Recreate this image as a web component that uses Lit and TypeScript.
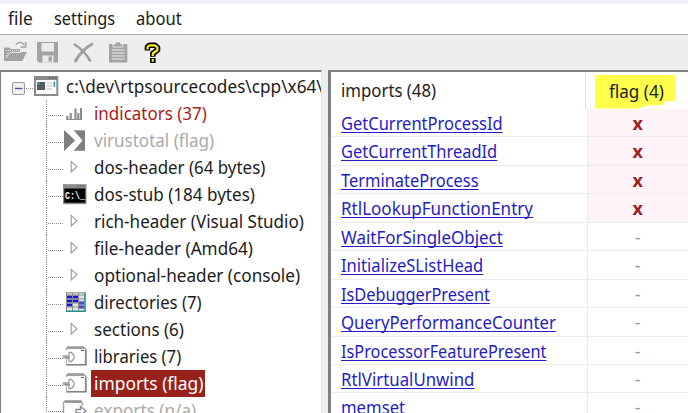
import { LitElement, html, css, svg, nothing } from "lit";
import { customElement, property } from "lit/decorators.js";
import { classMap } from "lit/directives/class-map.js";

// Single-line label condensed horizontally to a set advance width.
@customElement("fit-label")
class FitLabel extends LitElement {
  @property() text = "";
  @property({ type: Number }) span = 0;

  static styles = css`
    :host { display: block; white-space: pre; text-align: left; }
    .glyphs {
      display: inline-block;
      transform-origin: 0 50%;
      text-decoration: var(--line, none);
      text-decoration-thickness: 1.4px;
      text-underline-offset: 2px;
      text-decoration-skip-ink: none;
    }
  `;

  updated() {
    const glyphs = this.renderRoot.querySelector(".glyphs") as HTMLElement;
    this.style.width = `${this.span}px`;
    glyphs.style.transform = `scaleX(${this.span / glyphs.offsetWidth})`;
  }

  render() {
    return html`<span class="glyphs">${this.text}</span>`;
  }
}

const folderFrame = svg`
  <path d="M66.5 7V5.5L68 4H83.5L85.5 6V22" fill="none" stroke="#a5a5a5" stroke-width="1.4"/>
  <path d="M67 4.8H84" stroke="#a0a0a0" stroke-width="2.6"/>
  <path d="M66 21.8H86.5" stroke="#7d7d7d" stroke-width="1.5"/>
  <path d="M66.5 17V22" stroke="#aaa" stroke-width="1.1"/>
  <path d="M86 7V22" stroke="#777" stroke-width="1.2"/>
  <path d="M81 7.5H84" stroke="#666"/>
  <path d="M62.5 13H69V9.5H71.5L74 12.5V15.5L71.500 18.500H69V15.500H65" fill="#fff" stroke="#a0a0a0" stroke-width="1.3"/>
  <path d="M63 14.300H70" stroke="#999" stroke-width="1.6"/>`;

const glyph: Record<string, unknown> = {
  root: svg`
    <rect x="12.5" y="9.5" width="12" height="12" rx="1.5" fill="#f1f1f1" stroke="#999"/>
    <path d="M15 15.5H22.5" stroke="#4358a8" stroke-width="1.4"/>
    <rect x="35" y="4" width="22.3" height="18" fill="#fff" stroke="#8a8a8a" stroke-width="2"/>
    <path d="M34 5H58" stroke="#8a8a8a" stroke-width="4"/>
    <path d="M49 4.8H57" stroke="#444" stroke-dasharray="1.5 1.5"/>
    <rect x="37" y="9" width="8" height="8" fill="#5a5a5a"/>
    <rect x="37" y="9" width="3" height="3" fill="#299"/>
    <path d="M46.5 10H52M46.5 13H52M46.5 16H52" stroke="#bbb" stroke-width="1.2"/>
    <path d="M54.3 8.500V14" stroke="#299" stroke-width="1.4"/>`,
  bars: svg`<path d="M67.3 16V20M70.7 13V20M75.500 8.500V20M78.300 13V20M81 8V20" stroke="#8a8a8a" stroke-width="2.100"/>
    <path d="M66 19.5H82" stroke="#909090"/>`,
  virus: svg`<rect x="64" y="3.3" width="21" height="20.5" fill="#808080"/>
    <path d="M64 3L73.500 3L82.500 13.500L73.500 24H64L75 13.500Z" fill="#fff"/>
    <path d="M64 3.3L75 13.5L64 23.8Z" fill="#808080"/>`,
  arrow: svg`<path d="M71.2 7.5V18L77 12.7Z" fill="#fff" stroke="#999" stroke-width="1.1"/>`,
  dos: svg`<rect x="63" y="3.2" width="23.5" height="20" fill="#8c8c8c"/>
    <path d="M77 5H85.5" stroke="#555" stroke-dasharray="1.5 1.3"/>
    <rect x="64.3" y="7.5" width="21" height="14.2" fill="#000"/>
    <text class="prompt" x="65" y="17.5" textLength="20" lengthAdjust="spacingAndGlyphs">C:\\_</text>`,
  grid: svg`<rect x="66" y="3.5" width="19" height="19" fill="#e6e6e6"/>
    <path d="M67 8H72M73 8H78M67 12H72M73 12H78M67 16H72M79 14H84M79 18H84" stroke="#1616dc" stroke-width="2.8"/>
    <path d="M66.5 4V22M72.5 4V22M78.5 4V22M66 3.8H85M66 6H84M66 10H84M66 14H84M66 18H84" stroke="#8b8b8b" stroke-width="1"/>
    <path d="M85 3.5V22.3H66" fill="none" stroke="#2b8c8c" stroke-width="1.6"/>`,
  lib: folderFrame,
  exp: svg`<path d="M63.5 22V5.5L65 4H80.5L82.5 6V9" fill="none" stroke="#a5a5a5" stroke-width="1.4"/>
    <path d="M65 4.8H82" stroke="#999" stroke-width="2.5"/>
    <path d="M76 12.500H80.500V9.500L86 14L80.500 18.500V16H76Z" fill="#fff" stroke="#8c8c8c" stroke-width="1.4"/>`,
};

interface Node { text: string; span: number; icon: string; tone?: string; }

const nodes: Node[] = [
  { text: "c:\\dev\\rtpsourcecodes\\cpp\\x64\\", span: 257, icon: "root", tone: "root" },
  { text: "indicators (37)", span: 113, icon: "bars", tone: "alert" },
  { text: "virustotal (flag)", span: 120, icon: "virus", tone: "dim" },
  { text: "dos-header (64 bytes)", span: 171, icon: "arrow" },
  { text: "dos-stub (184 bytes)", span: 161, icon: "dos" },
  { text: "rich-header (Visual Studio)", span: 210, icon: "arrow" },
  { text: "file-header (Amd64)", span: 159, icon: "arrow" },
  { text: "optional-header (console)", span: 206, icon: "arrow" },
  { text: "directories (7)", span: 108, icon: "grid" },
  { text: "sections (6)", span: 90, icon: "arrow" },
  { text: "libraries (7)", span: 87, icon: "lib" },
  { text: "imports (flag)", span: 109, icon: "lib", tone: "picked" },
  { text: "exports (n/a)", span: 102, icon: "exp", tone: "dim" },
];

const imports: [string, number, boolean][] = [
  ["GetCurrentProcessId", 162, true],
  ["GetCurrentThreadId", 156, true],
  ["TerminateProcess", 138, true],
  ["RtlLookupFunctionEntry", 192, true],
  ["WaitForSingleObject", 162, false],
  ["InitializeSListHead", 142.5, false],
  ["IsDebuggerPresent", 148.5, false],
  ["QueryPerformanceCounter", 214.5, false],
  ["IsProcessorFeaturePresent", 205.5, false],
  ["RtlVirtualUnwind", 133.5, false],
  ["memset", 64, false],
];

@customElement("app-root")
class AppRoot extends LitElement {
  static styles = css`
    :host {
      display: flex;
      flex-direction: column;
      height: 413px;
      overflow: hidden;
      background: #eee;
      color: #1c1c1c;
      font: 18px/25px "Noto Sans", "Open Sans", sans-serif;
    }
    svg { display: block; flex: none; }
    .strip { flex: none; height: 4px; background: #eef1f8; }
    .menu {
      flex: none; display: flex; gap: 21px; box-sizing: border-box;
      height: 31px; padding: 2px 0 0 8px;
      background: #fff; border-bottom: 1.5px solid #aaa;
    }
    .tools { flex: none; height: 35px; background: #eee; }
    .panes { flex: 1; min-height: 0; display: flex; gap: 6px; }
    .tree {
      flex: none; box-sizing: border-box; width: 322px; overflow: hidden;
      background: #fff; border: solid #808080; border-width: 2.5px 0 0 1px;
      border-right: 1px solid #e4e4e4; padding-top: 1px;
    }
    .node { display: flex; height: 27px; }
    .node svg { margin-left: -1px; }
    .name { padding: 1px 3px 0; margin-left: -3px; height: 27px; box-sizing: border-box; }
    .root .name { margin-left: -31px; }
    .alert { color: #a81c1c; }
    .dim { color: #aaa; }
    .picked .name { background: #98221b; color: #fff; padding-right: 2px; }
    .prompt { font: bold 10px "Liberation Mono", monospace; fill: #fff; }
    .list {
      flex: 1; min-width: 0; overflow: hidden; background: #fff;
      border: solid #808080; border-width: 2.5px 0 0 3px;
    }
    .head { display: flex; height: 37px; }
    .head .call { border-right: 1px solid #ddd; width: 254.5px; line-height: 37px; }
    .row { display: flex; height: 28.45px; }
    .call {
      flex: none; box-sizing: border-box; width: 256.5px;
      padding-left: 9.5px; border-right: 1.5px solid #ececec;
      line-height: 28px;
    }
    .row .call { --line: underline; color: #241cc4; }
    .row .call, .row .mark { border-bottom: 1.2px solid #ececec; }
    .mark {
      flex: 1; box-sizing: border-box; display: flex; justify-content: center;
      line-height: 29px; color: #999;
    }
    .hit { background: #fdf3f8; color: #9c1f1f; font-weight: 700; }
    .marker {
      display: flex; width: 81px; height: 34px; margin: 2.5px 0 0 9px;
      background: #ffff4b; justify-content: center; line-height: 32px; padding-left: 3px;
      box-sizing: border-box;
      clip-path: polygon(0 0, 100% 0, 100% 78%, 88% 78%, 84% 90%, 65% 91%, 54% 100%, 0 100%);
    }
  `;

  private renderNode(n: Node) {
    const isRoot = n.icon === "root";
    const last = n.icon === "exp";
    return html`<div class=${classMap({ node: true, [n.tone ?? "plain"]: true })}>
      <svg width="94" height="27" viewBox="0 0 94 27">
        ${isRoot
          ? svg`<path d="M26 15.5H34" stroke="#888" stroke-dasharray="1 1"/>`
          : svg`<path d="M46.5 0V27" stroke="#888" stroke-dasharray="1 1"/>
             <path d="M48 ${last ? 14.5 : 15.5}H63" stroke="#888" stroke-dasharray="1 1"/>`}
        ${glyph[n.icon] ?? nothing}
      </svg>
      <div class="name"><fit-label text=${n.text} .span=${n.span}></fit-label></div>
    </div>`;
  }

  render() {
    return html`
      <div class="strip"></div>
      <div class="menu">
        <fit-label text="file" .span=${25}></fit-label>
        <fit-label text="settings" .span=${61}></fit-label>
        <fit-label text="about" .span=${46}></fit-label>
      </div>
      <div class="tools">
        <svg width="170" height="35" viewBox="0 35 170 35">
          <g fill="#a3a3a3">
            <path d="M4 61V47.500H9L11 49H20V52H27L22 61Z"/>
            <path d="M6 58L10 52.500H21" fill="none" stroke="#e4e4e4" stroke-width="1"/>
            <path d="M6 50.500H19M7 53.500H9M6 55.500H8" stroke="#e4e4e4" stroke-dasharray="1 1"/>
            <path d="M16 44.5Q20 40 24.5 45M25.8 42V47H20.5" fill="none" stroke="#a3a3a3" stroke-width="1.4"/>
            <path d="M37 42H58V62.5H39L37 60.5Z"/>
            <rect x="41.5" y="43" width="12.5" height="8.5" fill="#ececec"/>
            <rect x="42.5" y="55.5" width="11" height="7" fill="#ececec"/>
            <rect x="48.5" y="56.5" width="3.500" height="5"/>
          </g>
          <path d="M74 44Q85 51 90.5 61.5" fill="none" stroke="#a0a0a0" stroke-width="2.6"/>
          <path d="M93 43.5Q81 50 75 62" fill="none" stroke="#a0a0a0" stroke-width="3"/>
          <path d="M109 44H127.3V62.5H109Z" fill="#a3a3a3"/>
          <path d="M113 47V44H115.5V42H120.5V44H123V47Z" fill="#a3a3a3" stroke="#eee" stroke-width="0.8"/>
          <path d="M112 50H124.5M112 53H124.5M112 56H124.5M112 59H124.5" stroke="#f2f2f2" stroke-width="1.2"/>
          <g fill="none" stroke-linejoin="round">
            <path d="M147.5 50.5V47L149.5 45.3H155L157.5 47.5V50L152.8 53.5V56.8M152.8 58V63" stroke="#000" stroke-width="5.6"/>
            <path d="M147.5 49.5V47L149.5 45.3H155L157.5 47.5V50L152.8 53.5V56M152.8 59V61.8" stroke="#f4ee1c" stroke-width="2.2"/>
          </g>
        </svg>
      </div>
      <div class="panes">
        <div class="tree">${nodes.map((n) => this.renderNode(n))}</div>
        <div class="list">
          <div class="head">
            <div class="call"><fit-label text="imports (48)" .span=${95}></fit-label></div>
            <div class="marker"><fit-label text="flag (4)" .span=${55}></fit-label></div>
          </div>
          ${imports.map(([name, span, hit]) => html`<div class="row">
            <div class="call"><fit-label text=${name} .span=${span}></fit-label></div>
            <div class=${classMap({ mark: true, hit })}>${hit ? "x" : "-"}</div>
          </div>`)}
        </div>
      </div>
    `;
  }
}
